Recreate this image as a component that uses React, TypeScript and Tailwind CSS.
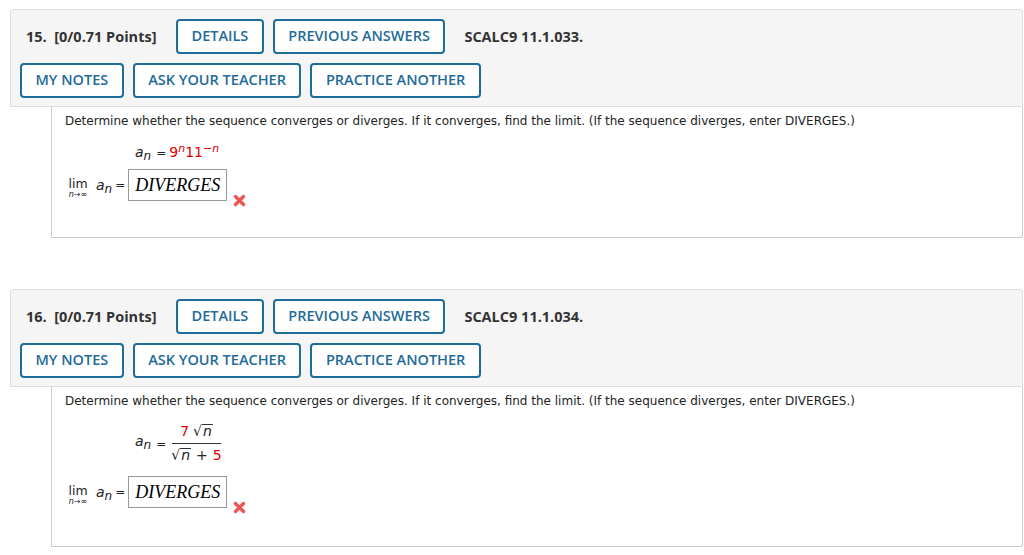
import React from "react";

const HEAD_FONT = { fontFamily: '"Open Sans", "Liberation Sans", sans-serif' };
const BODY_FONT = { fontFamily: '"DejaVu Sans", Verdana, sans-serif' };

function Btn({ children }: { children: React.ReactNode }) {
  return (
    <button className="h-[35px] px-[13.5px] border-2 border-[#1f6b99] rounded-[4px] bg-white text-[#1f6b99] text-[14.5px] font-semibold leading-none whitespace-nowrap">
      {children}
    </button>
  );
}

function Header({ num, code }: { num: string; code: string }) {
  return (
    <div
      className="ml-[10px] mr-[1px] bg-[#f5f5f5] border border-[#dddddd] rounded-t-[3px] pt-[9px] pb-[8px] pl-[9px]"
      style={HEAD_FONT}
    >
      <div className="flex items-center">
        <span className="pl-[6px] w-[156px] text-[14.5px] font-bold text-[#333]">
          {num}.&nbsp; [0/0.71 Points]
        </span>
        <div className="flex gap-[9px]">
          <Btn>DETAILS</Btn>
          <Btn>PREVIOUS ANSWERS</Btn>
        </div>
        <span className="ml-[19px] text-[14.5px] font-bold text-[#333]">{code}</span>
      </div>
      <div className="flex gap-[9px] mt-[9px]">
        <Btn>MY NOTES</Btn>
        <Btn>ASK YOUR TEACHER</Btn>
        <Btn>PRACTICE ANOTHER</Btn>
      </div>
    </div>
  );
}

// a_n
function An() {
  return (
    <span className="italic">
      a<sub className="text-[12px] relative top-[3px] align-baseline">n</sub>
    </span>
  );
}

function WrongMark() {
  return (
    <svg width="13" height="13" viewBox="0 0 13 13" className="ml-[6px] relative top-[15px]">
      <path d="M2.5 2.5 L10.5 10.5 M10.5 2.5 L2.5 10.5" stroke="#ec5656" strokeWidth="3.4" strokeLinecap="round" />
    </svg>
  );
}

function LimRow() {
  return (
    <div className="flex items-center">
      <div className="flex flex-col items-center w-[26px] mt-[6px]">
        <span className="text-[12.5px] leading-[13px]">lim</span>
        <span className="text-[8px] leading-[9px] italic">n→∞</span>
      </div>
      <span className="ml-[5px] text-[14px]">
        <An />
      </span>
      <span className="ml-[3px] text-[12px]">=</span>
      <div
        className="ml-[3px] h-[32px] w-[99px] border border-[#999] flex items-center justify-center text-[18px] italic text-black"
        style={{ fontFamily: '"Liberation Serif", "Times New Roman", serif' }}
      >
        DIVERGES
      </div>
      <WrongMark />
    </div>
  );
}

function Sqrt({ children }: { children: React.ReactNode }) {
  return (
    <span className="inline-flex items-end">
      <span className="text-[14px] leading-none">√</span>
      <span className="border-t border-[#333] leading-[13px] px-[1px] italic">{children}</span>
    </span>
  );
}

const PROMPT =
  "Determine whether the sequence converges or diverges. If it converges, find the limit. (If the sequence diverges, enter DIVERGES.)";

function Body1() {
  return (
    <div
      className="ml-[51px] mr-[1px] h-[131px] bg-white border-x border-b border-[#cccccc] rounded-br-[3px] pt-[7px] pl-[13px] text-[#222]"
      style={BODY_FONT}
    >
      <p className="text-[12px] leading-[14px]">{PROMPT}</p>
      <div className="mt-[14px] ml-[70px] flex items-baseline text-[14px]">
        <An />
        <span className="ml-[5px] text-[12px]">=</span>
        <span className="ml-[3px] text-[#e00000] text-[14px]">
          9<sup className="italic text-[11px]">n</sup>11<sup className="italic text-[11px]">−n</sup>
        </span>
      </div>
      <div className="mt-[6px]">
        <LimRow />
      </div>
    </div>
  );
}

function Body2() {
  return (
    <div
      className="ml-[51px] mr-[1px] h-[160px] bg-white border-x border-b border-[#cccccc] rounded-br-[3px] pt-[7px] pl-[13px] text-[#222]"
      style={BODY_FONT}
    >
      <p className="text-[12px] leading-[14px]">{PROMPT}</p>
      <div className="mt-[13px] ml-[70px] flex items-center text-[14px]">
        <span className="mb-[4px]">
          <An />
        </span>
        <span className="ml-[5px] text-[12px]">=</span>
        <div className="ml-[5px] flex flex-col items-center">
          <div className="pb-[1px] px-[2px]">
            <span className="text-[#e00000] mr-[4px]">7</span>
            <Sqrt>n</Sqrt>
          </div>
          <div className="w-[49px] border-t border-[#333]" />
          <div className="pt-[1px]">
            <Sqrt>n</Sqrt>
            <span className="mx-[5px]">+</span>
            <span className="text-[#e00000]">5</span>
          </div>
        </div>
      </div>
      <div className="mt-[10px]">
        <LimRow />
      </div>
    </div>
  );
}

export default function App() {
  return (
    <div className="w-[1024px] h-[555px] bg-white overflow-hidden pt-[9px]">
      <Header num="15" code="SCALC9 11.1.033." />
      <Body1 />
      <div className="h-[51px]" />
      <Header num="16" code="SCALC9 11.1.034." />
      <Body2 />
    </div>
  );
}
